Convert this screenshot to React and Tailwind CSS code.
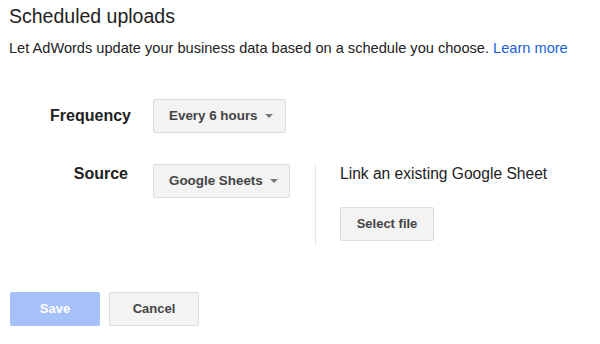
export default function App() {
  return (
    <div className="w-[600px] h-[344px] bg-white text-[#222] font-['Liberation_Sans',Arial,sans-serif] relative">
      <div className="pl-[9px] pt-[4px]">
        <h1 className="text-[19.5px] leading-[24px] text-[#222]">Scheduled uploads</h1>
        <p className="mt-[11px] text-[14.6px] leading-[18px] text-[#222]">
          Let AdWords update your business data based on a schedule you choose.{" "}
          <a className="text-[#1a5fd6]" href="#">Learn more</a>
        </p>
      </div>

      <div className="mt-[42px] flex items-start">
        <div className="w-[131px] text-right text-[16px] font-bold leading-[34px]">Frequency</div>
        <button className="ml-[22px] h-[34px] w-[133px] flex items-center pl-[15px] rounded-[2px] border border-[#dcdcdc] bg-[#f3f3f3] text-[13.4px] font-bold text-[#444]">
          Every 6 hours
          <span className="ml-[7px] w-0 h-0 border-l-[4px] border-r-[4px] border-t-[4px] border-l-transparent border-r-transparent border-t-[#777]" />
        </button>
      </div>

      <div className="mt-[31px] flex items-start">
        <div className="w-[128px] text-right text-[16px] font-bold leading-[19px]">Source</div>
        <button className="ml-[25px] h-[34px] w-[137px] flex items-center pl-[15px] rounded-[2px] border border-[#dcdcdc] bg-[#f3f3f3] text-[13.4px] font-bold text-[#444]">
          Google Sheets
          <span className="ml-[7px] w-0 h-0 border-l-[4px] border-r-[4px] border-t-[4px] border-l-transparent border-r-transparent border-t-[#777]" />
        </button>
        <div className="ml-[25px] h-[82px] border-l border-[#e5e5e5] pl-[24px]">
          <div className="text-[15.6px] leading-[19px] text-[#222]">Link an existing Google Sheet</div>
          <button className="mt-[24px] h-[34px] w-[94px] rounded-[2px] border border-[#dcdcdc] bg-[#f3f3f3] text-[13px] font-bold text-[#444]">
            Select file
          </button>
        </div>
      </div>

      <div className="mt-[46px] pl-[10px] flex gap-[9px]">
        <button className="h-[34px] w-[90px] rounded-[2px] bg-[#a6c0f8] text-[13px] font-bold text-white">Save</button>
        <button className="h-[34px] w-[90px] rounded-[2px] border border-[#dcdcdc] bg-[#f3f3f3] text-[13px] font-bold text-[#444]">Cancel</button>
      </div>
    </div>
  );
}
